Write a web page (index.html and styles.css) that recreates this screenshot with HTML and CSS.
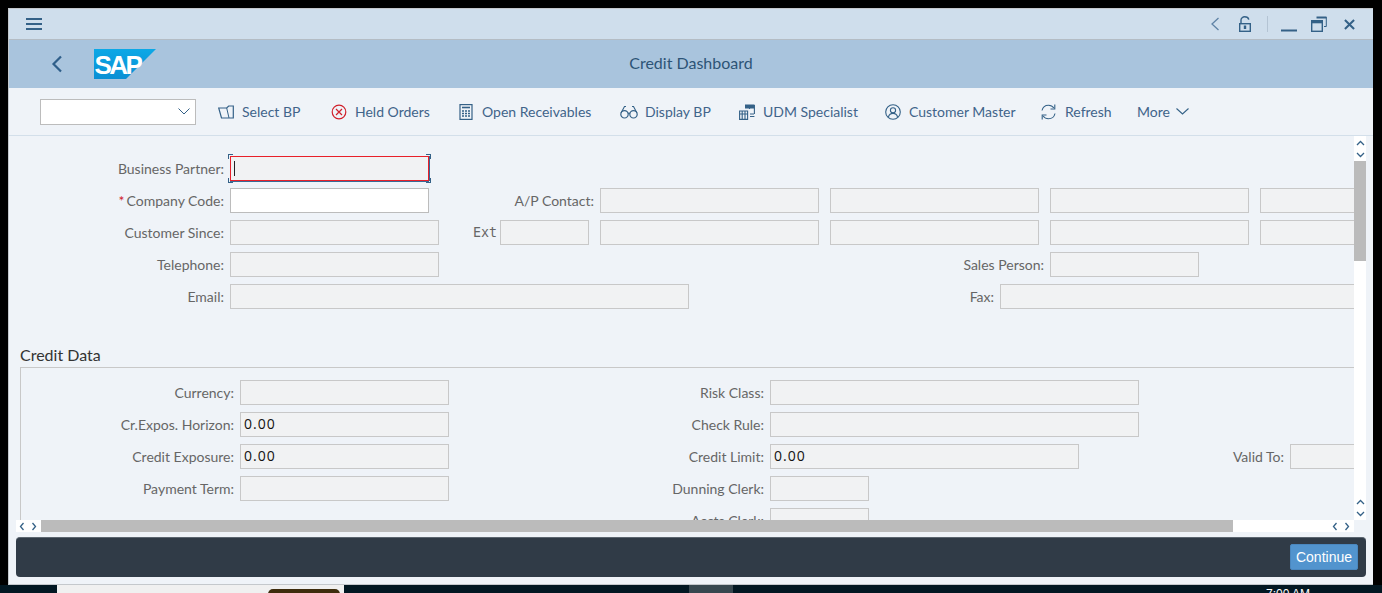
FILE: index.html
```html
<!DOCTYPE html>
<html lang="en">
<head>
    <meta charset="UTF-8">
    <meta name="viewport" content="width=device-width, initial-scale=1.0">
    <title>Credit Dashboard</title>
    <link rel="stylesheet" href="styles.css">
</head>
<body>
    <div class="window">

        <!-- Window title bar -->
        <div class="titlebar">
            <svg class="menu-icon" width="18" height="14" viewBox="0 0 18 14"><path d="M1 2h16M1 7h16M1 12h16" stroke="#346187" stroke-width="2"/></svg>
            <div class="win-controls">
                <svg width="10" height="16" viewBox="0 0 10 16"><path d="M8.5 2L2 8l6.5 6" fill="none" stroke="#5f83a6" stroke-width="1.3"/></svg>
                <svg class="lock" width="12" height="16" viewBox="0 0 12 16"><path d="M2 7.500V4C2 2.200 3.800 0.800 5.600 0.800S9.400 2 9.800 3.600" fill="none" stroke="#346187" stroke-width="1.400"/><rect x="0.700" y="7.700" width="10.600" height="7.600" fill="none" stroke="#346187" stroke-width="1.400"/><path d="M6 9.500v3.500" stroke="#346187" stroke-width="2.400"/></svg>
                <span class="win-sep"></span>
                <svg class="minimize" width="16" height="16" viewBox="0 0 16 16"><path d="M0 14.500h16" stroke="#346187" stroke-width="2"/></svg>
                <svg class="restore" width="16" height="16" viewBox="0 0 16 16"><path d="M5.500 1.500h10" stroke="#346187" stroke-width="2"/><path d="M15.300 1v9.500h-2.300" fill="none" stroke="#346187" stroke-width="1"/><rect x="0.700" y="4.700" width="10.600" height="10.600" fill="none" stroke="#346187" stroke-width="1.400"/><path d="M1 6h10" stroke="#346187" stroke-width="2.600"/></svg>
                <svg class="close" width="11" height="11" viewBox="0 0 12 12"><path d="M1 1l10 10M11 1L1 11" stroke="#346187" stroke-width="2.200"/></svg>
            </div>
        </div>

        <!-- Header with logo and screen title -->
        <div class="header">
            <svg class="back" width="12" height="18" viewBox="0 0 12 18"><path d="M10 1.5L2.5 9l7.5 7.5" fill="none" stroke="#2f5f8a" stroke-width="2.2"/></svg>
            <svg class="logo" width="62" height="30" viewBox="0 0 62 30">
                <defs><linearGradient id="sapBlue" x1="0" y1="0" x2="0" y2="1"><stop offset="0" stop-color="#0ca8e6"/><stop offset="1" stop-color="#0a8fd4"/></linearGradient></defs>
                <polygon points="0,0 62,0 32,30 0,30" fill="url(#sapBlue)"/>
                <text x="0.500" y="24.500" class="logo-text">SAP</text>
            </svg>
            <div class="screen-title">Credit Dashboard</div>
        </div>

        <!-- Application toolbar -->
        <div class="toolbar">
            <div class="combo">
                <svg width="12" height="7" viewBox="0 0 12 7"><path d="M0.5 0.5L6 6l5.5-5.5" fill="none" stroke="#346187" stroke-width="1"/></svg>
            </div>
            <div class="tool">
                <svg width="16" height="14" viewBox="0 0 16 14"><path d="M0.700 3h8l2-2h4.600v12H3.500z" fill="none" stroke="#346187" stroke-width="1.200"/><path d="M8.700 3l2.300 10" fill="none" stroke="#346187" stroke-width="1"/></svg>
                <span>Select BP</span>
            </div>
            <div class="tool">
                <svg width="16" height="16" viewBox="0 0 16 16"><circle cx="8" cy="8" r="6.8" fill="none" stroke="#d01f2a" stroke-width="1.2"/><path d="M5 5l6 6M11 5l-6 6" stroke="#d01f2a" stroke-width="1.2"/></svg>
                <span>Held Orders</span>
            </div>
            <div class="tool wide-gap">
                <svg width="14" height="16" viewBox="0 0 14 16"><rect x="1" y="0.6" width="12" height="14.8" fill="none" stroke="#346187" stroke-width="1.2"/><path d="M3 3.5h8" stroke="#346187" stroke-width="1.6"/><path d="M3 7h2M6 7h2M9 7h2M3 9.5h2M6 9.5h2M9 9.5h2M3 12h2M6 12h2M9 12h2" stroke="#346187" stroke-width="1.4"/></svg>
                <span>Open Receivables</span>
            </div>
            <div class="tool narrow-gap">
                <svg width="18" height="14" viewBox="0 0 18 14"><circle cx="4.5" cy="9.3" r="3.7" fill="none" stroke="#346187" stroke-width="1.2"/><circle cx="13.5" cy="9.3" r="3.7" fill="none" stroke="#346187" stroke-width="1.2"/><path d="M8 8.5c.6-.5 1.4-.5 2 0M1 8L4.5 1.5H6M17 8L13.5 1.5H12" fill="none" stroke="#346187" stroke-width="1.1"/></svg>
                <span>Display BP</span>
            </div>
            <div class="tool">
                <svg width="16" height="16" viewBox="0 0 16 16"><path d="M0.6 7h8v8.4h-8zM0.6 10h8M3.2 7v8.4M6 7v8.4" fill="none" stroke="#346187" stroke-width="1.1"/><rect x="6" y="0.5" width="9.5" height="4" fill="#346187"/><path d="M15.4 1v9M10.5 1v4M11 12.5h4.4M11 10h4" fill="none" stroke="#346187" stroke-width="1.1"/></svg>
                <span>UDM Specialist</span>
            </div>
            <div class="tool">
                <svg width="16" height="16" viewBox="0 0 16 16"><circle cx="8" cy="8" r="7.3" fill="none" stroke="#346187" stroke-width="1.1"/><circle cx="8" cy="6.3" r="2.6" fill="none" stroke="#346187" stroke-width="1.1"/><path d="M3.4 13c.7-2.4 2.5-3.6 4.6-3.6s3.900 1.200 4.600 3.600" fill="none" stroke="#346187" stroke-width="1.1"/></svg>
                <span>Customer Master</span>
            </div>
            <div class="tool">
                <svg width="17" height="16" viewBox="0 0 17 16"><path d="M2 6.500C2.700 3.400 5.300 1.200 8.500 1.200c2.300 0 4.200 1.100 5.400 2.800M15 9.500c-.7 3.100-3.300 5.300-6.500 5.300-2.300 0-4.200-1.100-5.400-2.800" fill="none" stroke="#346187" stroke-width="1.1"/><path d="M14.800 0.500V5h-4.300M2.200 15.500V11h4.300" fill="none" stroke="#346187" stroke-width="1.1"/></svg>
                <span>Refresh</span>
            </div>
            <div class="tool more">
                <span>More</span>
                <svg width="13" height="7" viewBox="0 0 13 7"><path d="M0.500 0.500L6.500 6l6-5.500" fill="none" stroke="#346187" stroke-width="1.1"/></svg>
            </div>
        </div>

        <!-- Scrollable form area -->
        <div class="main">
            <div class="main-top">
                <div class="form">
                    <div class="row">
                        <label class="lbl w-215">Business Partner:</label>
                        <div class="field focused f-199"><span class="caret"></span></div>
                    </div>
                    <div class="row">
                        <label class="lbl w-215"><span class="req">*</span>Company Code:</label>
                        <div class="field open f-199"></div>
                        <label class="lbl w-165">A/P Contact:</label>
                        <div class="field f-219"></div>
                        <div class="field gap f-209"></div>
                        <div class="field gap f-199"></div>
                        <div class="field gap f-199"></div>
                    </div>
                    <div class="row">
                        <label class="lbl w-215">Customer Since:</label>
                        <div class="field f-209"></div>
                        <label class="lbl mono w-58">Ext</label>
                        <div class="field f-89"></div>
                        <div class="field gap f-219"></div>
                        <div class="field gap f-209"></div>
                        <div class="field gap f-199"></div>
                        <div class="field gap f-199"></div>
                    </div>
                    <div class="row">
                        <label class="lbl w-215">Telephone:</label>
                        <div class="field f-209"></div>
                        <label class="lbl w-605">Sales Person:</label>
                        <div class="field f-149"></div>
                    </div>
                    <div class="row">
                        <label class="lbl w-215">Email:</label>
                        <div class="field f-459"></div>
                        <label class="lbl w-305">Fax:</label>
                        <div class="field f-400"></div>
                    </div>

                    <h2 class="section-title">Credit Data</h2>
                    <div class="group">
                        <div class="row">
                            <label class="lbl w-213">Currency:</label>
                            <div class="field f-209"></div>
                            <label class="lbl w-315">Risk Class:</label>
                            <div class="field f-369"></div>
                        </div>
                        <div class="row">
                            <label class="lbl w-213">Cr.Expos. Horizon:</label>
                            <div class="field value f-209">0.00</div>
                            <label class="lbl w-315">Check Rule:</label>
                            <div class="field f-369"></div>
                        </div>
                        <div class="row">
                            <label class="lbl w-213">Credit Exposure:</label>
                            <div class="field value f-209">0.00</div>
                            <label class="lbl w-315">Credit Limit:</label>
                            <div class="field value f-309">0.00</div>
                            <label class="lbl w-205">Valid To:</label>
                            <div class="field f-99"></div>
                        </div>
                        <div class="row">
                            <label class="lbl w-213">Payment Term:</label>
                            <div class="field f-209"></div>
                            <label class="lbl w-315">Dunning Clerk:</label>
                            <div class="field f-99"></div>
                        </div>
                        <div class="row">
                            <label class="lbl w-213"></label>
                            <div class="blank f-209"></div>
                            <label class="lbl w-315">Accts Clerk:</label>
                            <div class="field f-99"></div>
                        </div>
                    </div>
                </div>

                <div class="vscroll">
                    <div class="v-arrows">
                        <svg width="9" height="20" viewBox="0 0 9 20"><path d="M1 6l3.500-3.500L8 6M1 14l3.500 3.500L8 14" fill="none" stroke="#346187" stroke-width="1.300"/></svg>
                    </div>
                    <div class="v-thumb"></div>
                    <div class="v-track"></div>
                    <div class="v-arrows">
                        <svg width="9" height="20" viewBox="0 0 9 20"><path d="M1 6l3.500-3.500L8 6M1 14l3.500 3.500L8 14" fill="none" stroke="#346187" stroke-width="1.300"/></svg>
                    </div>
                </div>
            </div>

            <div class="hscroll">
                <div class="h-arrows">
                    <svg width="20" height="9" viewBox="0 0 20 9"><path d="M4.500 1L1.500 4.500 4.500 8M13.500 1l3 3.500L13.500 8" fill="none" stroke="#346187" stroke-width="1.300"/></svg>
                </div>
                <div class="h-thumb"></div>
                <div class="h-track">
                    <svg width="20" height="9" viewBox="0 0 20 9"><path d="M4.500 1L1.500 4.500 4.500 8M13.500 1l3 3.500L13.500 8" fill="none" stroke="#346187" stroke-width="1.300"/></svg>
                </div>
            </div>
        </div>

        <!-- Footer with main action -->
        <div class="footer">
            <button class="btn-continue">Continue</button>
        </div>
    </div>

    <!-- Desktop showing below the window -->
    <div class="taskbar">
        <div class="task-app"><span class="task-pill"></span></div>
        <div class="task-active"></div>
        <div class="task-clock">7:00 AM</div>
    </div>
</body>
</html>
```

FILE: styles.css
```css
/* Page */
html, body {
    margin: 0;
    height: 593px;
    overflow: hidden;
    background-color: #000;
    font-family: Lato, sans-serif;
}

.window {
    box-sizing: border-box;
    width: 1365px;
    height: 577px;
    margin: 8px 0 0 8px;
    border-top: 1px solid #c4c8cc;
    border-left: 1px solid #c4c8cc;
    border-bottom: 1px solid #c4c8cc;
    background-color: #eff3f8;
    display: flex;
    flex-direction: column;
}

/* Title bar */
.titlebar {
    height: 31px;
    flex: none;
    box-sizing: border-box;
    border-bottom: 1px solid #b4bcc4;
    background-color: #cfdeec;
    display: flex;
    align-items: center;
    justify-content: space-between;
}

.menu-icon {
    margin-left: 16px;
}

.win-controls {
    display: flex;
    align-items: center;
    margin-right: 18px;
}

.lock {
    margin-left: 19px;
}

.win-sep {
    width: 1px;
    height: 16px;
    margin: 0 13px 0 16px;
    background-color: #b4c4d4;
}

.restore {
    margin-left: 14px;
}

.close {
    margin-left: 17px;
}

/* Header */
.header {
    height: 48px;
    flex: none;
    background-color: #a9c4dd;
    display: flex;
    align-items: center;
    position: relative;
}

.back {
    margin-left: 42px;
}

.logo {
    margin-left: 31px;
}

.logo-text {
    font-family: "Liberation Sans", sans-serif;
    font-size: 26px;
    font-weight: bold;
    letter-spacing: -2.600px;
    fill: #fff;
}

.screen-title {
    position: absolute;
    left: 0;
    right: 0;
    margin-top: -4px;
    text-align: center;
    font-size: 16px;
    color: #2d5476;
}

/* Toolbar */
.toolbar {
    height: 48px;
    flex: none;
    box-sizing: border-box;
    border-bottom: 1px solid #d3dfea;
    padding-left: 31px;
    display: grid;
    grid-template-columns: 178px 113px 128px 161px 119px 146px 155px 97px auto;
    align-items: center;
    font-size: 14px;
    color: #41648a;
}

.combo {
    box-sizing: border-box;
    width: 156px;
    height: 26px;
    border: 1px solid #bcbcbc;
    background-color: #fff;
    display: flex;
    align-items: center;
    justify-content: flex-end;
    padding-right: 5px;
}

.tool {
    display: flex;
    align-items: center;
    gap: 8px;
    white-space: nowrap;
}

.tool.wide-gap {
    gap: 9px;
}

.tool.narrow-gap {
    gap: 7px;
}

.tool.more {
    gap: 6px;
}

/* Main area */
.main {
    flex: none;
    height: 396px;
}

.main-top {
    display: flex;
    height: 384px;
}

.form {
    width: 1345px;
    height: 384px;
    flex: none;
    box-sizing: border-box;
    padding-top: 20px;
    overflow: hidden;
}

.row {
    display: flex;
    height: 26px;
    margin-bottom: 6px;
    white-space: nowrap;
}

.lbl {
    flex: none;
    box-sizing: border-box;
    padding-right: 6px;
    text-align: right;
    font-size: 14px;
    line-height: 26px;
    color: #666;
}

.lbl.mono {
    font-family: "DejaVu Sans Mono", monospace;
    font-size: 13.300px;
    padding-right: 3px;
}

.req {
    color: #d0202a;
    margin-right: 2px;
}

.w-58 { width: 61px; }
.w-165 { width: 171px; }
.w-205 { width: 211px; }
.w-213 { width: 219px; }
.w-215 { width: 221px; }
.w-305 { width: 311px; }
.w-315 { width: 321px; }
.w-605 { width: 611px; }

.field {
    flex: none;
    box-sizing: border-box;
    height: 25px;
    border: 1px solid #c8c8c8;
    background-color: #f1f2f3;
}

.field.open {
    background-color: #fff;
    border-color: #bcbcbc;
}

.field.gap {
    margin-left: 11px;
}

.field.value {
    padding-left: 3px;
    font-family: "Open Sans", sans-serif;
    font-size: 14px;
    letter-spacing: 1px;
    line-height: 22px;
    color: #111;
}

.blank {
    flex: none;
}

.f-89 { width: 89px; }
.f-99 { width: 99px; }
.f-149 { width: 149px; }
.f-199 { width: 199px; }
.f-209 { width: 209px; }
.f-219 { width: 219px; }
.f-309 { width: 309px; }
.f-369 { width: 369px; }
.f-400 { width: 400px; }
.f-459 { width: 459px; }

/* Focused field with corner marks */
.field.focused {
    height: 25px;
    border: 1px solid #e8202a;
    box-shadow: 0 1px 0 #3a6a96, 1px 0 0 #3a6a96;
    position: relative;
    display: flex;
    align-items: center;
    padding-left: 3px;
}

.field.focused::before {
    content: "";
    position: absolute;
    left: -3px;
    right: -3px;
    top: -3px;
    bottom: -3px;
    background:
        linear-gradient(#346187, #346187) left top / 5px 1px no-repeat,
        linear-gradient(#346187, #346187) left top / 1px 5px no-repeat,
        linear-gradient(#346187, #346187) right top / 5px 1px no-repeat,
        linear-gradient(#346187, #346187) right top / 1px 5px no-repeat,
        linear-gradient(#346187, #346187) left bottom / 5px 1px no-repeat,
        linear-gradient(#346187, #346187) left bottom / 1px 5px no-repeat,
        linear-gradient(#346187, #346187) right bottom / 5px 1px no-repeat,
        linear-gradient(#346187, #346187) right bottom / 1px 5px no-repeat;
}

.caret {
    width: 1px;
    height: 15px;
    background-color: #222;
}

/* Section */
.section-title {
    margin: 35px 0 0 11px;
    height: 22px;
    font-size: 16px;
    font-weight: normal;
    line-height: 19px;
    color: #333;
}

.group {
    margin-left: 11px;
    width: 1400px;
    box-sizing: border-box;
    padding-top: 12px;
    border-top: 1px solid #c8c8c8;
    border-left: 1px solid #c8c8c8;
}

/* Scrollbars */
.vscroll {
    width: 12px;
    flex: none;
    background-color: #fff;
    display: flex;
    flex-direction: column;
}

.v-arrows {
    height: 25px;
    flex: none;
    display: flex;
    align-items: center;
    justify-content: center;
}

.v-thumb {
    height: 100px;
    flex: none;
    background-color: #bbb;
}

.v-track {
    flex: 1;
}

.hscroll {
    display: flex;
    height: 12px;
    margin-left: 7px;
    width: 1338px;
}

.h-arrows {
    width: 25px;
    flex: none;
    background-color: #fff;
    display: flex;
    align-items: center;
    justify-content: center;
}

.h-thumb {
    width: 1192px;
    flex: none;
    background-color: #bbb;
}

.h-track {
    flex: 1;
    box-sizing: border-box;
    background-color: #fff;
    display: flex;
    align-items: center;
    justify-content: flex-end;
    padding-right: 2px;
}

/* Footer */
.footer {
    box-sizing: border-box;
    height: 40px;
    flex: none;
    margin: 5px 7px 0 7px;
    border-radius: 4px;
    border-top: 1px solid #5c6670;
    background-color: #303b47;
    display: flex;
    align-items: center;
    justify-content: flex-end;
    padding-right: 8px;
}

.btn-continue {
    box-sizing: border-box;
    width: 68px;
    height: 26px;
    margin-bottom: 1px;
    padding: 0;
    border: 1px solid #4a87bf;
    border-radius: 2px;
    background-color: #5294ce;
    color: #fff;
    font-family: "Liberation Sans", sans-serif;
    font-size: 14px;
}

/* Desktop strip */
.taskbar {
    height: 8px;
    background-color: #021722;
    position: relative;
    overflow: hidden;
}

.task-app {
    position: absolute;
    left: 57px;
    top: 0;
    width: 287px;
    height: 8px;
    background-color: #f0f0f0;
}

.task-pill {
    position: absolute;
    left: 211px;
    top: 4px;
    width: 72px;
    height: 10px;
    border-radius: 5px;
    background-color: #3e2c0c;
}

.task-active {
    position: absolute;
    left: 689px;
    top: 0;
    width: 44px;
    height: 8px;
    background-color: #37474f;
}

.task-clock {
    position: absolute;
    left: 1266px;
    top: 2px;
    font-family: "Liberation Sans", sans-serif;
    font-size: 12px;
    line-height: 14px;
    color: #fff;
}
```
